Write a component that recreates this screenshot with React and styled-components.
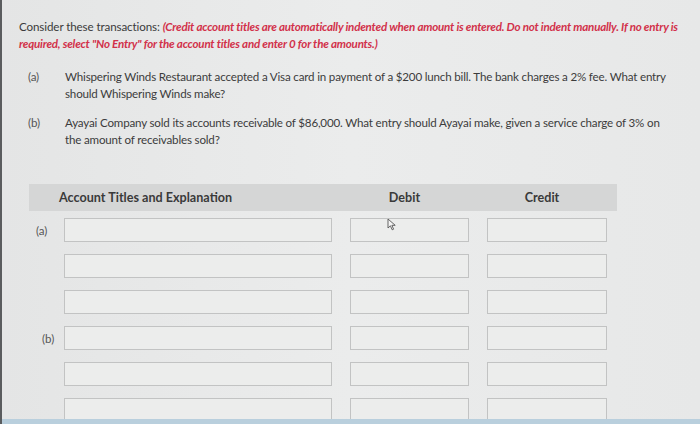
import React from 'react';
import styled, { createGlobalStyle } from 'styled-components';

const Global = createGlobalStyle`
  html, body {
    margin: 0;
    padding: 0;
    background: #e8e9e9;
  }
  #root {
    width: 700px;
    height: 424px;
    overflow: hidden;
  }
`;

const Page = styled.div`
  position: relative;
  box-sizing: border-box;
  width: 700px;
  height: 424px;
  padding: 18px 0 0 17px;
  background: linear-gradient(90deg, #e4e5e5 0%, #ebecec 50%, #e7e8e8 100%);
  border-left: 2px solid #5a5c5e;
  font-family: Lato, "Open Sans", sans-serif;
  color: #3a3a3a;
  overflow: hidden;
`;

const Instructions = styled.p`
  margin: 0;
  font-size: 11.6px;
  line-height: 17px;
  letter-spacing: -0.1px;
  color: #3b3b3b;
`;

const Red = styled.span`
  color: #d2314a;
  font-weight: 700;
  font-style: italic;
  letter-spacing: -0.22px;
`;

const Questions = styled.div`
  display: flex;
  flex-direction: column;
  gap: 12px;
  margin: 16px 0 0 9px;
`;

const Question = styled.div`
  display: grid;
  grid-template-columns: 37px 1fr;
  font-size: 11.6px;
  line-height: 17px;
  letter-spacing: -0.18px;
  color: #3c3c3c;
`;

const Tag = styled.span`
  color: #555;
`;

const Table = styled.div`
  margin: 36px 0 0 10px;
  width: 588px;
`;

const HeaderBand = styled.div`
  display: grid;
  grid-template-columns: 12px 268px 119px 120px;
  column-gap: 18px;
  height: 27px;
  align-items: center;
  background: #d5d6d6;
  font-size: 12.6px;
  font-weight: 700;
  color: #3a3a3a;
`;

const HeadCell = styled.div`
  text-align: ${p => (p.center ? 'center' : 'left')};
  grid-column: ${p => p.col};
`;

const Rows = styled.div`
  display: flex;
  flex-direction: column;
  gap: 12px;
  margin-top: 7px;
`;

const Row = styled.div`
  display: grid;
  grid-template-columns: 17px 268px 119px 120px;
  column-gap: 18px;
  align-items: center;
`;

const RowLabel = styled.div`
  font-size: 11.5px;
  color: #555;
  white-space: nowrap;
  padding-left: ${p => p.indent}px;
`;

const Field = styled.div`
  box-sizing: border-box;
  height: 24px;
  background: #ecedec;
  border: 1px solid #c2c3c3;
`;

const Cursor = styled.svg`
  position: absolute;
  left: 385px;
  top: 218px;
`;

const BottomStrip = styled.div`
  position: absolute;
  left: 0;
  right: 0;
  bottom: 0;
  height: 5px;
  background: #b9cfdd;
`;

const rows = [
  { label: '(a)', indent: 7 },
  { label: '', indent: 0 },
  { label: '', indent: 0 },
  { label: '(b)', indent: 13 },
  { label: '', indent: 0 },
  { label: '', indent: 0 },
];

export default function App() {
  return (
    <>
      <Global />
      <Page>
        <Instructions>
          Consider these transactions:{' '}
          <Red>
            (Credit account titles are automatically indented when amount is entered. Do not indent manually. If no entry is
            <br />
            required, select "No Entry" for the account titles and enter 0 for the amounts.)
          </Red>
        </Instructions>

        <Questions>
          <Question>
            <Tag>(a)</Tag>
            <span>
              Whispering Winds Restaurant accepted a Visa card in payment of a $200 lunch bill. The bank charges a 2% fee. What entry
              <br />
              should Whispering Winds make?
            </span>
          </Question>
          <Question>
            <Tag>(b)</Tag>
            <span>
              Ayayai Company sold its accounts receivable of $86,000. What entry should Ayayai make, given a service charge of 3% on
              <br />
              the amount of receivables sold?
            </span>
          </Question>
        </Questions>

        <Table>
          <HeaderBand>
            <HeadCell col="2">Account Titles and Explanation</HeadCell>
            <HeadCell col="3" center>Debit</HeadCell>
            <HeadCell col="4" center>Credit</HeadCell>
          </HeaderBand>
          <Rows>
            {rows.map((r, i) => (
              <Row key={i}>
                <RowLabel indent={r.indent}>{r.label}</RowLabel>
                <Field />
                <Field />
                <Field />
              </Row>
            ))}
          </Rows>
        </Table>

        <Cursor width="10" height="13" viewBox="0 0 10 13">
          <path d="M1 1 L1 10 L3.4 7.8 L5.2 11.8 L6.6 11.2 L4.9 7.3 L8.2 7.3 Z" fill="#f4f4f4" stroke="#555" strokeWidth="0.9" strokeLinejoin="round" />
        </Cursor>
        <BottomStrip />
      </Page>
    </>
  );
}
